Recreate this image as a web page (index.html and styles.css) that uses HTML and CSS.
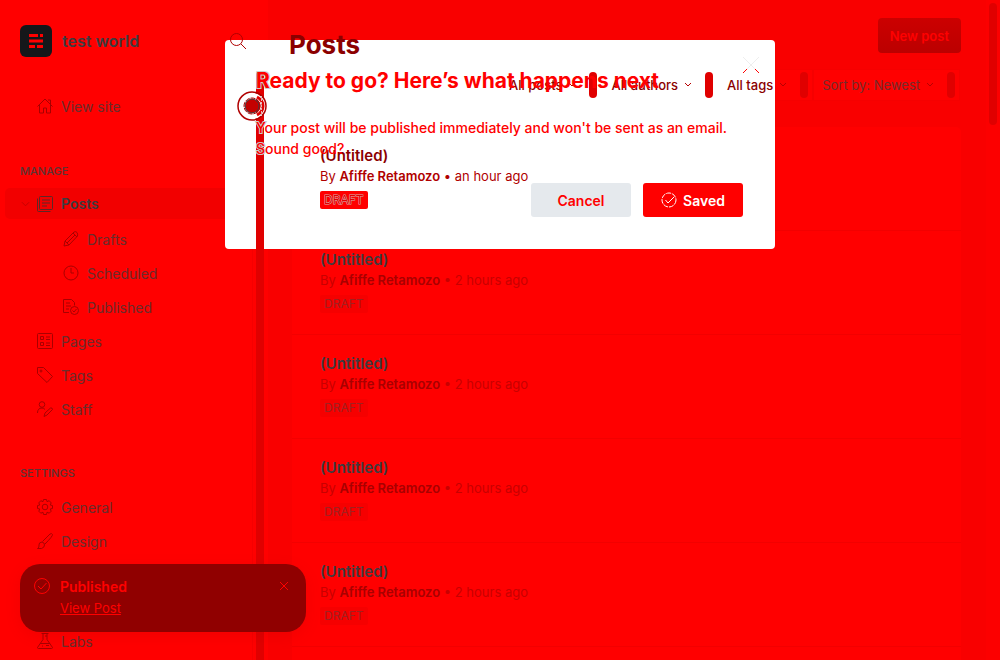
FILE: index.html
```
<!DOCTYPE html>
<html lang="en">
<head>
<meta charset="utf-8">
<meta name="viewport" content="width=device-width, initial-scale=1">
<title>Posts - test world</title>
<link rel="stylesheet" href="styles.css">
</head>
<body>
<div class="app">
  <aside class="sidebar">
    <header class="site">
      <svg class="logo" viewBox="0 0 32 32"><rect width="32" height="32" rx="6" fill="#15171a"/><g fill="#f00"><path d="M9 9h9v3H9zM20 9h3v3h-3zM9 14.500h14v3H9zM9 20h6v3H9zM17 20h6v3h-6z"/></g></svg>
      <strong class="site-name">test world</strong>
      <button class="search" aria-label="Search"><svg class="icon over" viewBox="0 0 16 16"><circle cx="6.500" cy="6.500" r="6"/><path d="M11 11l5 5"/></svg></button>
    </header>
    <nav class="nav">
      <a class="item" href="#"><svg class="icon" viewBox="0 0 16 16"><path d="M.5 8.500L8 1l7.500 7.500M2.500 7v8h4v-5h3v5h4V7M11 2h2.500v4"/></svg>View site</a>
      <h2 class="group">Manage</h2>
      <a class="item active" href="#"><svg class="chevron" viewBox="0 0 10 6"><path d="M1 1l4 4 4-4"/></svg><svg class="icon" viewBox="0 0 16 16"><rect x="2.500" y=".5" width="13" height="13" rx="1"/><path d="M.5 2.500v12q0 1 1 1h12M5 4h8M5 7h8M5 10h5"/></svg>Posts</a>
      <a class="item sub" href="#"><svg class="icon" viewBox="0 0 16 16"><path d="M1 15l1-5L11 1q2-1 3 .500t.5 3.500L6 14zM2 10l4 4M10 2l4 4M4 12l8-8"/></svg>Drafts</a>
      <a class="item sub" href="#"><svg class="icon" viewBox="0 0 16 16"><circle cx="8" cy="8" r="7"/><path d="M8 3v5h3"/></svg>Scheduled</a>
      <a class="item sub" href="#"><svg class="icon" viewBox="0 0 16 16"><path d="M6 13.500H.5V.5h8l3 3v3M3 4h4M3 7h5M3 10h3"/><circle cx="11.500" cy="11.500" r="4"/><path d="M9.500 11.500l1.500 1.500 2.500-3"/></svg>Published</a>
      <a class="item" href="#"><svg class="icon" viewBox="0 0 16 16"><rect x=".5" y=".5" width="15" height="15" rx="1"/><path d="M3.500 3.500h3v3h-3zM3.500 9.500h3v3h-3zM9 4h4M9 6.500h4M9 10h4M9 12.500h4"/></svg>Pages</a>
      <a class="item" href="#"><svg class="icon" viewBox="0 0 16 16"><path d="M.5.500h6l9 9-5.500 6-9.500-9z"/><circle cx="4" cy="4" r="1"/></svg>Tags</a>
      <a class="item" href="#"><svg class="icon" viewBox="0 0 16 16"><circle cx="5" cy="3.500" r="2.800"/><path d="M.5 12q0-5 4.500-5 2 0 3 1.500M7 15.500l1-3.500 5.500-5q2-.5 2 1.500L10 14z"/></svg>Staff</a>
      <h2 class="group">Settings</h2>
      <a class="item" href="#"><svg class="icon" viewBox="0 0 16 16"><circle cx="8" cy="8" r="2.800"/><path d="M6.500.5h3l.5 2.200 2.200-1 2 2.200-1 2.100 2.300.5v3l-2.300.5 1 2.200-2 2-2.200-1-.5 2.300h-3L6 13.200l-2.200 1-2-2 1-2.200-2.300-.5v-3L2.800 6l-1-2.100 2-2.200 2.200 1z"/></svg>General</a>
      <a class="item" href="#"><svg class="icon" viewBox="0 0 16 16"><path d="M.5 15.500q2-1 1.500-3.500t3-3q2.500.5 2.500 3t-3 3.500zM5.500 8.500L13 1q2-1 2.500.5T8 11"/></svg>Design</a>
      <a class="item labs" href="#"><svg class="icon" viewBox="0 0 16 16"><path d="M4.500.5h7M6 .5v6l-5.500 8q0 1 1 1h13q1 0 1-1L10 6.500v-6M3 10.500h10M5 13h1M9 12.500h3M8 3h2"/></svg>Labs</a>
    </nav>
    <div class="track"><span class="thumb"></span></div>
  </aside>

  <main class="main">
    <header class="page-head">
      <h1 class="page-title">Posts</h1>
      <button class="new-post">New post</button>
    </header>
    <div class="filters">
      <div class="filter lit"><button class="filter-btn">All posts <svg class="caret" viewBox="0 0 8 6"><path d="M1 1l3 3 3-3"/></svg></button><span class="grip"></span></div>
      <div class="filter lit"><button class="filter-btn">All authors <svg class="caret" viewBox="0 0 8 6"><path d="M1 1l3 3 3-3"/></svg></button><span class="grip"></span></div>
      <div class="filter lit"><button class="filter-btn">All tags <svg class="caret" viewBox="0 0 8 6"><path d="M1 1l3 3 3-3"/></svg></button><span class="grip"></span></div>
      <div class="filter"><button class="filter-btn">Sort by: Newest <svg class="caret" viewBox="0 0 8 6"><path d="M1 1l3 3 3-3"/></svg></button><span class="grip"></span></div>
    </div>
    <ul class="posts">
      <li class="post lit"><h3 class="post-title">(Untitled)</h3><p class="meta">By <b>Afiffe Retamozo</b> • an hour ago</p><span class="badge">DRAFT</span></li>
      <li class="post"><h3 class="post-title">(Untitled)</h3><p class="meta">By <b>Afiffe Retamozo</b> • 2 hours ago</p><span class="badge">DRAFT</span></li>
      <li class="post"><h3 class="post-title">(Untitled)</h3><p class="meta">By <b>Afiffe Retamozo</b> • 2 hours ago</p><span class="badge">DRAFT</span></li>
      <li class="post"><h3 class="post-title">(Untitled)</h3><p class="meta">By <b>Afiffe Retamozo</b> • 2 hours ago</p><span class="badge">DRAFT</span></li>
      <li class="post"><h3 class="post-title">(Untitled)</h3><p class="meta">By <b>Afiffe Retamozo</b> • 2 hours ago</p><span class="badge">DRAFT</span></li>
      <li class="post"></li>
    </ul>
  </main>
  <div class="page-track"><span class="page-thumb"></span></div>
</div>

<section class="modal" role="dialog" aria-labelledby="modal-title">
  <button class="close" aria-label="Close"><svg viewBox="0 0 16 16"><path stroke="#eee" d="M0 0l16 16M16 0L0 16"/><path stroke="#f00" d="M0 16l4-4M16 16l-4-4"/></svg></button>
  <h2 class="modal-title" id="modal-title"><span class="edge">R</span>eady to go? Here’s what happens next</h2>
  <p class="modal-text"><span class="edge">Y</span>our post will be published immediately and won't be sent as an email. <span class="edge">S</span>ound good?</p>
  <div class="actions">
    <button class="btn cancel">Cancel</button>
    <button class="btn saved"><svg class="tick" viewBox="0 0 16 16"><circle cx="8" cy="8" r="7" stroke-dasharray="5 1"/><path d="M4.500 8l2.500 3 6-6"/></svg>Saved</button>
  </div>
</section>

<svg class="pointer" viewBox="0 0 30 30" aria-hidden="true"><circle cx="15" cy="15" r="11" fill="none" stroke="#fff" stroke-width="5"/><path d="M20 6q6 3 6 9t-6 9" stroke="#e00000" stroke-width="3"/><circle cx="15" cy="15" r="14" fill="none" stroke="#b00000" stroke-width="1.500"/><circle cx="15" cy="15" r="7" fill="#c40000"/><circle cx="15" cy="15" r="8" fill="none" stroke="#a80000" stroke-dasharray="5 1"/><path d="M24.500 5v20" stroke="#dbb" stroke-dasharray="2 1"/></svg>

<aside class="toast" role="status">
  <svg class="toast-icon" viewBox="0 0 16 16"><circle cx="8" cy="8" r="7.500"/><path d="M4 8l3 3 5.500-6"/></svg>
  <div class="toast-body"><strong class="toast-title">Published</strong><a class="toast-link" href="#">View Post</a></div>
  <button class="toast-close" aria-label="Dismiss"><svg viewBox="0 0 8 8"><path d="M0 0l8 8M8 0L0 8"/></svg></button>
</aside>
</body>
</html>
```
FILE: styles.css
```
* { box-sizing: border-box; }
body { margin: 0; background: #f00; font-family: Inter, "Liberation Sans", sans-serif; font-size: 14px; color: #3c3c40; overflow: hidden; }
h1, h2, h3, p, ul { margin: 0; padding: 0; list-style: none; }
button { margin: 0; padding: 0; border: 0; background: none; font: inherit; color: inherit; }
a { color: inherit; text-decoration: none; }
svg { display: block; fill: none; stroke: currentColor; }

/* Text and controls sit above the dialog surface, backgrounds below it. */
.page-title, .filter-btn, .grip, .post-title, .meta, .badge, .over, .thumb { position: relative; z-index: 2; }

.app { display: grid; grid-template-columns: 268px 1fr 14px; height: 100vh; }
.sidebar { display: grid; grid-template-columns: 1fr 16px; grid-template-rows: 71px 1fr; min-height: 0; }
.site { grid-column: 1 / 3; display: flex; gap: 10px; padding: 25px 22px 0 20px; }
.logo { width: 32px; height: 32px; stroke: none; }
.site-name { flex: 1; line-height: 32px; font-size: 16px; font-weight: 600; }
.search { align-self: flex-start; padding-top: 8px; color: #b00000; }
.icon { flex: none; width: 16px; height: 16px; }
.nav { overflow: hidden; padding: 18px 0 0 5px; }
.item { display: flex; align-items: center; gap: 8px; height: 34px; padding-left: 32px; font-size: 14px; color: #6a2c2c; }
.item .icon { color: #a80000; }
.group { height: 16px; margin: 40px 0 9px 15px; line-height: 16px; font-size: 11px; font-weight: 500; color: #5c3434; text-transform: uppercase; }
.sub ~ .group { margin-top: 39px; }
.active { height: 31px; margin: 0 0 3px; padding-left: 16px; gap: 7px; border-radius: 5px; background: #f20000; font-weight: 600; color: #3c3c40; }
.item.active .icon { margin-right: 1px; color: #5c2828; }
.chevron { width: 9px; height: 6px; color: #c00000; }
.sub { padding-left: 58px; }
.labs { margin-top: 66px; }
.track { padding-left: 3px; border: solid #f60000; border-width: 0 0 0 1px; }
.thumb { display: block; width: 8px; height: 100%; border-radius: 4px 4px 0 0; background: #e00000; }

.main { display: grid; grid-template-rows: 69px 32px 1fr; min-width: 0; min-height: 0; padding: 0 25px 0 24px; background: #f90000; }
.page-head { display: flex; justify-content: space-between; align-items: flex-start; padding-top: 18px; }
.page-title { margin: 10px 0 0 -3px; line-height: 34px; font-size: 26px; font-weight: 700; color: #8b0000; }
.new-post { height: 35px; padding: 0 12px; border-radius: 4px; background: linear-gradient(#cc0000, #bb0000); font-size: 13px; font-weight: 600; color: #f00; }
.filters { display: flex; justify-content: flex-end; padding-right: 1px; }
.filter { display: flex; align-items: center; gap: 4px; padding-right: 4px; border: 1px solid #f60000; background: #f00; }
.filter-btn { display: flex; align-items: center; gap: 6px; height: 30px; padding: 0 9px 0 8px; font-size: 13px; color: #742c2c; }
.lit .filter-btn { color: #8b0000; font-weight: 500; }
.caret { width: 8px; height: 6px; color: #b80000; }
.grip { width: 8px; height: 26px; border-radius: 4px; background: #e00000; }
.posts { margin-top: 26px; border-radius: 5px 5px 0 0; background: #f00; overflow: hidden; min-height: 0; }
.post { display: flex; flex-direction: column; align-items: flex-start; height: 104px; padding: 19px 28px 0; border-bottom: 1px solid #f30000; }
.post-title { line-height: 20px; font-size: 15px; font-weight: 600; }
.meta { line-height: 20px; font-size: 13px; color: #c80000; }
.meta b { font-weight: 600; color: #a80000; }
.badge { margin-top: 5px; padding: 0 4px; line-height: 18px; border-radius: 2px; background: #f60000; font-size: 12px; color: #a02020; }
.post.lit .post-title { color: #8b0000; }
.post.lit .meta, .post.lit .meta b { color: #b00000; }
.post.lit .badge { background: #f00; color: #e00000; -webkit-text-stroke: 1px #d8b0b0; paint-order: stroke; }
.page-track { padding: 3px; background: #fc0000; }
.page-thumb { display: block; width: 8px; height: 122px; border-radius: 4px; background: #e00000; }

.modal { position: absolute; top: 40px; left: 0; right: 0; width: 550px; margin: 0 auto; padding: 27px 32px 32px 31px; border-radius: 4px; background: #fff; color: #f00; }
.modal-title, .modal-text, .actions { position: relative; z-index: 3; }
.modal-title { line-height: 28px; font-size: 21px; font-weight: 700; }
.modal-text { margin-top: 22px; line-height: 21px; font-size: 14px; font-weight: 500; }
.edge { -webkit-text-stroke: 2px #ccc; paint-order: stroke; }
.actions { display: flex; justify-content: flex-end; gap: 12px; margin-top: 24px; }
.btn { display: flex; align-items: center; justify-content: center; gap: 6px; width: 100px; height: 34px; border-radius: 3px; font-weight: 600; }
.cancel { background: #e5e9ed; color: #f00; }
.saved { background: #f00; color: #fff; }
.tick { width: 16px; height: 16px; }
.close { position: absolute; top: 17px; right: 16px; }
.close svg { width: 16px; height: 16px; }
.pointer { position: absolute; z-index: 4; top: 91px; left: 237px; width: 30px; height: 30px; }

.toast { position: absolute; z-index: 5; left: 20px; bottom: 28px; display: flex; gap: 10px; width: 286px; padding: 12px 18px 13px 14px; border-radius: 20px; background: #900000; box-shadow: 0 4px 16px rgb(120 0 0 / 10%); color: #f00; }
.toast-icon { width: 16px; height: 16px; margin-top: 2px; color: #f00; }
.toast-body { flex: 1; }
.toast-title { display: block; line-height: 21px; font-size: 14px; font-weight: 600; }
.toast-link { display: block; width: fit-content; line-height: 22px; font-size: 13px; text-decoration: underline; }
.toast-close { align-self: flex-start; padding-top: 6px; }
.toast-close svg { width: 8px; height: 8px; stroke-width: 1; overflow: visible; }
```
